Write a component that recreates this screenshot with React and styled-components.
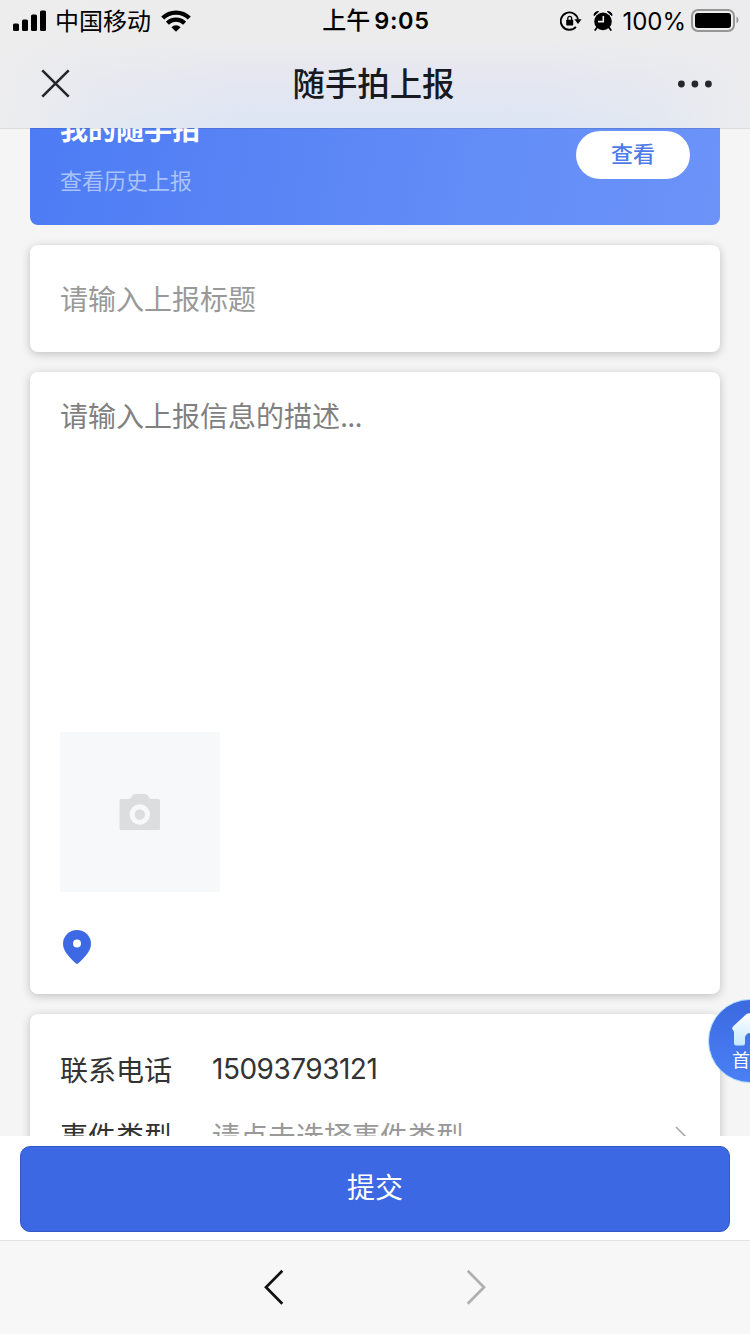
import React from 'react';
import styled, { createGlobalStyle } from 'styled-components';

const GlobalStyle = createGlobalStyle`
  * { box-sizing: border-box; }
  body {
    margin: 0;
    font-family: Inter, 'Noto Sans CJK SC', sans-serif;
    background: #f5f5f5;
  }
`;

const Screen = styled.div`
  position: relative;
  display: flex;
  flex-direction: column;
  width: 750px;
  height: 1334px;
  overflow: hidden;
  background: #f5f5f5;
`;

const Header = styled.header`
  position: relative;
  z-index: 1;
  flex: none;
  height: 128px;
  box-shadow: 0 1px 0 rgba(0, 0, 0, 0.1);
  background:
    linear-gradient(to right, #ededee 0%, rgba(237, 237, 238, 0.4) 12%, rgba(237, 237, 238, 0) 32%, rgba(237, 237, 238, 0) 72%, rgba(237, 237, 238, 0.35) 88%, #ececee 100%),
    linear-gradient(to bottom, #ececec 30%, #e5e7f1 62%, #dde6f4 100%);
`;

const StatusBar = styled.div`
  display: grid;
  grid-template-columns: 1fr auto 1fr;
  align-items: center;
  height: 40px;
  padding: 0 11px 0 13px;
  color: #000;
  font-size: 24px;
  line-height: 40px;
`;

const StatusGroup = styled.div`
  display: flex;
  align-items: center;
  justify-content: ${(p) => p.$align || 'flex-start'};
  height: 40px;
`;

const Carrier = styled.span`
  margin: 2px 10px 0 8px;
  font-size: 24px;
`;

const Clock = styled.span`
  padding-top: 1px;
  font-size: 24px;
  font-weight: 500;
  letter-spacing: 0;
  white-space: nowrap;
  b { margin-left: 4px; font-weight: 600; font-size: 23.5px; letter-spacing: 0.7px; }
`;

const Percent = styled.span`
  margin: 2px 5px 0 9px;
  font-size: 24px;
  letter-spacing: 0;
`;

const NavBar = styled.div`
  display: grid;
  grid-template-columns: 100px 1fr 100px;
  align-items: center;
  height: 88px;
  padding: 0 37px 0 40px;
`;

const NavTitle = styled.h1`
  margin: 2px 6px 0 0;
  text-align: center;
  font-size: 32.4px;
  font-weight: 500;
  line-height: 48px;
  color: #181a1f;
`;

const IconSlot = styled.div`
  display: flex;
  justify-content: ${(p) => p.$align || 'flex-start'};
`;

const Content = styled.main`
  flex: 1;
  display: flex;
  flex-direction: column;
  gap: 20px;
  min-height: 0;
  padding: 0 30px;
  overflow: hidden;
`;

const Banner = styled.section`
  flex: none;
  display: flex;
  align-items: center;
  justify-content: space-between;
  height: 140px;
  margin-top: -43px;
  padding: 0 30px;
  border-radius: 8px;
  background: linear-gradient(100deg, #4c7bf4 0%, #5b86f5 42%, #638df7 65%, #6b93f8 100%);
`;

const BannerText = styled.div`
  padding-bottom: 4px;
`;

const BannerTitle = styled.div`
  font-size: 28px;
  font-weight: 700;
  line-height: 42px;
  color: #fff;
`;

const BannerNote = styled.div`
  margin-top: 14px;
  font-size: 22px;
  line-height: 32px;
  color: #a9c3fb;
`;

const ViewButton = styled.button`
  width: 114px;
  height: 48px;
  padding: 0 0 6px;
  border: 0;
  border-radius: 24px;
  background: #fff;
  color: #4f7be9;
  font-family: inherit;
  font-size: 22px;
  font-weight: 500;
`;

const Card = styled.section`
  flex: none;
  display: flex;
  flex-direction: column;
  height: ${(p) => p.$height}px;
  padding: ${(p) => p.$pad || '0 30px'};
  border-radius: 8px;
  background: #fff;
  box-shadow: 0 2px 10px rgba(0, 0, 0, 0.22);
`;

const Placeholder = styled.div`
  font-size: 28px;
  line-height: ${(p) => p.$line}px;
  color: ${(p) => p.$color || '#999'};
`;

const Dots = styled.span`
  letter-spacing: -0.8px;
`;

const PhotoBox = styled.div`
  display: flex;
  align-items: center;
  justify-content: center;
  width: 160px;
  height: 160px;
  margin-top: auto;
  background: #f7f8fa;
`;

const Location = styled.div`
  display: flex;
  height: 34px;
  margin: 38px 0 0 3px;
`;

const Field = styled.div`
  display: grid;
  grid-template-columns: 152px 1fr auto;
  align-items: center;
  height: 66px;
  font-size: 28px;
  color: #333;
`;

const FieldValue = styled.span`
  color: ${(p) => (p.$muted ? '#999' : '#333')};
  letter-spacing: ${(p) => p.$spacing || 0}px;
`;

const HomeButton = styled.div`
  position: absolute;
  z-index: 2;
  top: 999px;
  right: -42px;
  display: flex;
  flex-direction: column;
  align-items: center;
  width: 84px;
  height: 84px;
  padding-top: 13px;
  border: 1.5px solid #a9dcfc;
  border-radius: 50%;
  background: linear-gradient(#3c69e0, #4a80f5);
  color: #fff;
  font-size: 18px;
  line-height: 24px;
  white-space: nowrap;
  span { margin-top: 3px; }
`;

const SubmitBar = styled.footer`
  flex: none;
  height: 104px;
  padding: 10px 20px 8px;
  background: #fff;
`;

const SubmitButton = styled.button`
  width: 100%;
  height: 86px;
  padding: 0 0 7px;
  border: 1px solid #3459c4;
  border-radius: 10px;
  background: #3d68e3;
  color: #fff;
  font-family: inherit;
  font-size: 28px;
`;

const BrowserBar = styled.nav`
  flex: none;
  display: flex;
  justify-content: center;
  gap: 182px;
  height: 94px;
  padding-top: 28px;
  border-top: 1px solid #e2e2e2;
  background: #f7f7f7;
`;

const Signal = () => (
  <svg width="34" height="22" viewBox="0 0 34 22">
    <rect x="0" y="13.5" width="6" height="7.5" rx="1.5" />
    <rect x="9" y="9.5" width="6" height="11.5" rx="1.5" />
    <rect x="18" y="4.5" width="6" height="16.5" rx="1.5" />
    <rect x="27" y="0.5" width="6" height="20.5" rx="1.5" />
  </svg>
);

const Wifi = () => (
  <svg width="30" height="22" viewBox="0 0 30 22" fill="none" stroke="#000" strokeWidth="4.2">
    <path d="M1.7 8.1a18.8 18.8 0 0 1 26.6 0" />
    <path d="M6.4 13.3a12.100 12.100 0 0 1 17.200 0" />
    <path d="M10.4 17.2a6.5 6.5 0 0 1 9.2 0L15 21.8z" fill="#000" stroke="none" />
  </svg>
);

const RotationLock = () => (
  <svg width="22" height="20" viewBox="0 0 22 20" fill="none" stroke="#000">
    <path d="M15.9 15.900A8.700 8.700 0 1 1 18 8.600" strokeWidth="1.9" />
    <path d="M14.4 8.200h7.200l-3.600 4.800z" fill="#000" stroke="none" />
    <rect x="6.200" y="8.700" width="7" height="5.800" rx="0.8" fill="#000" stroke="none" />
    <path d="M7.8 9V7.200a1.900 1.900 0 0 1 3.800 0V9" strokeWidth="1.300" />
  </svg>
);

const AlarmIcon = styled.svg`
  margin-left: 11px;
`;

const Alarm = () => (
  <AlarmIcon width="20" height="20" viewBox="0 0 20 20" fill="none" stroke="#000">
    <circle cx="10" cy="10.400" r="8.800" fill="#000" stroke="none" />
    <path d="M1 4.600Q1 .6 5.600.6 3.500 2.800 1 4.600zM19 4.600Q19 .6 14.400.6 16.500 2.800 19 4.600z" fill="#000" strokeWidth="1" />
    <path d="M4 16.500 2.200 19M16 16.500l1.800 2.500" strokeWidth="1.800" strokeLinecap="round" />
    <path d="M10.300 5v5.600H5" stroke="#ededed" strokeWidth="1.600" />
  </AlarmIcon>
);

const Battery = () => (
  <svg width="48" height="23" viewBox="0 0 48 23">
    <rect x="1" y="1" width="42" height="21" rx="6" fill="none" stroke="#969696" strokeWidth="2" />
    <rect x="4" y="4" width="36" height="15" rx="3" />
    <path d="M45.5 7.500v7q2-.9 2-3.500t-2-3.500z" fill="#969696" />
  </svg>
);

const Close = () => (
  <svg width="30" height="30" viewBox="0 0 30 30" fill="none" stroke="#25272d" strokeWidth="2.600">
    <path d="M2.300 1.300 28.700 27.700M28.700 1.300 2.300 27.700" />
  </svg>
);

const More = () => (
  <svg width="36" height="8" viewBox="0 0 36 8" fill="#25272d">
    <circle cx="4.400" cy="4" r="3.400" />
    <circle cx="17.900" cy="4" r="3.400" />
    <circle cx="31.400" cy="4" r="3.400" />
  </svg>
);

const Camera = () => (
  <svg width="42" height="36" viewBox="0 0 42 36">
    <path d="M2 5h8q1.800-.3 2.700-2.500Q13.800 0 16 0h10q2.300 0 3.600 2.500Q30.600 4.700 32 5h7.500q1.500 0 1.500 1.500v28q0 1.500-1.500 1.500h-37Q.5 36 .5 34.500v-28Q.5 5 2 5z" fill="#dcdddf" />
    <circle cx="20.800" cy="20.500" r="7.700" fill="#dcdddf" stroke="#f7f8fa" strokeWidth="5" />
  </svg>
);

const Pin = () => (
  <svg width="28" height="34" viewBox="0 0 28 34">
    <path d="M14 0a14 14 0 0 0-14 14c0 4.300 2.300 7.800 5 11.300 2.500 3.200 5.400 6 8 8.300q1 .8 2 0c2.600-2.300 5.500-5.100 8-8.300 2.700-3.500 5-7 5-11.300A14 14 0 0 0 14 0z" fill="#3d69e4" />
    <circle cx="14" cy="13.500" r="4" fill="#fff" />
  </svg>
);

const HouseIcon = styled.svg`
  flex: none;
`;

const House = () => (
  <HouseIcon width="36" height="33" viewBox="0 0 36 33">
    <defs>
      <linearGradient id="houseFill" x1="0" y1="0" x2="0" y2="1">
        <stop offset="0" stopColor="#fff" />
        <stop offset="1" stopColor="#c5e9ff" />
      </linearGradient>
    </defs>
    <path d="M14.500 1q3.500-1.500 7 0l13 12q2.500 3 .5 4L34 19v11.500q0 2-2 2h-7q-2 0-2-2V25a5 5 0 0 0-10 0v5.500q0 2-2 2H4q-2 0-2-2V19l-1-2Q-1 15.500 1.500 13z" fill="url(#houseFill)" />
  </HouseIcon>
);

const Chevron = ({ color, back }) => (
  <svg width="20" height="36" viewBox="0 0 20 36" fill="none" stroke={color} strokeWidth="2.700">
    <path d={back ? 'M18.300 1.800 2 18.300l16.300 16.500' : 'M1.700 1.800 18 18.300 1.700 34.800'} />
  </svg>
);

const RowChevronIcon = styled.svg`
  margin: 4px 1px 0 0;
`;

const RowChevron = () => (
  <RowChevronIcon width="14" height="22" viewBox="0 0 14 22" fill="none" stroke="#aaa" strokeWidth="1.700">
    <path d="M1 1 11 11 1 21" />
  </RowChevronIcon>
);

export default function App() {
  return (
    <Screen>
      <GlobalStyle />
      <Header>
        <StatusBar>
          <StatusGroup>
            <Signal />
            <Carrier>中国移动</Carrier>
            <Wifi />
          </StatusGroup>
          <Clock>上午<b>9:05</b></Clock>
          <StatusGroup $align="flex-end">
            <RotationLock />
            <Alarm />
            <Percent>100%</Percent>
            <Battery />
          </StatusGroup>
        </StatusBar>
        <NavBar>
          <IconSlot><Close /></IconSlot>
          <NavTitle>随手拍上报</NavTitle>
          <IconSlot $align="flex-end"><More /></IconSlot>
        </NavBar>
      </Header>
      <Content>
        <Banner>
          <BannerText>
            <BannerTitle>我的随手拍</BannerTitle>
            <BannerNote>查看历史上报</BannerNote>
          </BannerText>
          <ViewButton>查看</ViewButton>
        </Banner>
        <Card $height={107}>
          <Placeholder $line={110}>请输入上报标题</Placeholder>
        </Card>
        <Card $height={622} $pad="25px 30px 30px">
          <Placeholder $line={40} $color="#808080">请输入上报信息的描述<Dots>...</Dots></Placeholder>
          <PhotoBox><Camera /></PhotoBox>
          <Location><Pin /></Location>
        </Card>
        <Card $height={300} $pad="22px 30px">
          <Field>
            <span>联系电话</span>
            <FieldValue $spacing={-0.5}>15093793121</FieldValue>
          </Field>
          <Field>
            <span>事件类型</span>
            <FieldValue $muted>请点击选择事件类型</FieldValue>
            <RowChevron />
          </Field>
        </Card>
      </Content>
      <SubmitBar>
        <SubmitButton>提交</SubmitButton>
      </SubmitBar>
      <BrowserBar>
        <Chevron back color="#111" />
        <Chevron color="#b0b0b0" />
      </BrowserBar>
      <HomeButton>
        <House />
        <span>首页</span>
      </HomeButton>
    </Screen>
  );
}
